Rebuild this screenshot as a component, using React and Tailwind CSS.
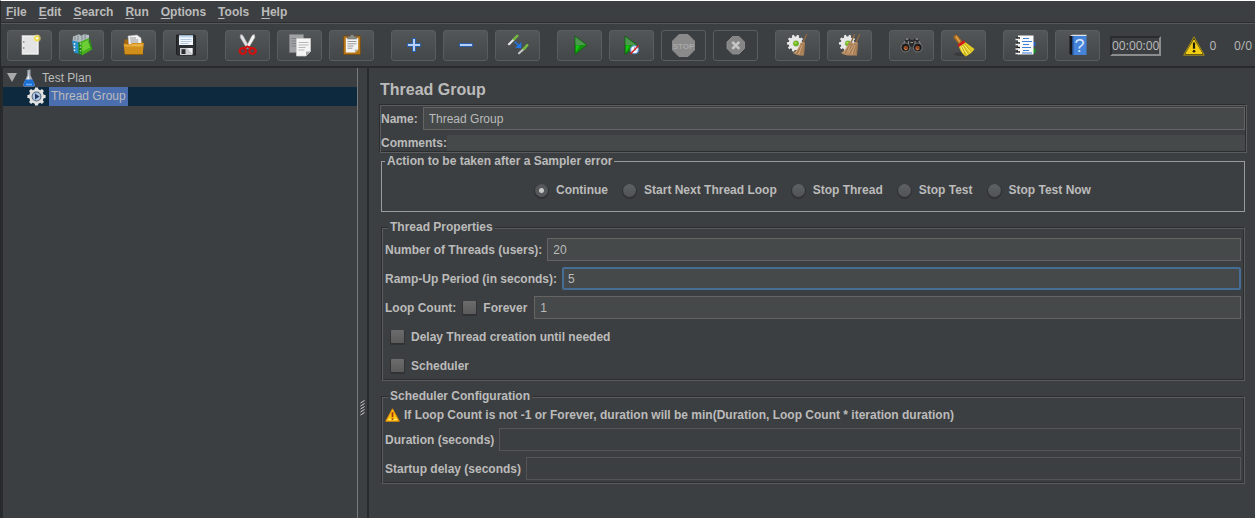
import React from "react";

/* ---------- toolbar icons, all on a 23 x 23 grid ---------- */

function Icon({ children }) {
  return (
    <svg width="23" height="23" viewBox="0 0 23 23" aria-hidden="true" className="block">
      {children}
    </svg>
  );
}

const gearPoints = (cx, cy, outer, inner, teeth) => {
  const pts = [];
  const step = (Math.PI * 2) / teeth;
  for (let i = 0; i < teeth; i++) {
    const a = i * step;
    [
      [inner, -0.32],
      [outer, -0.2],
      [outer, 0.2],
      [inner, 0.32],
    ].forEach(([r, f]) => {
      pts.push(`${(cx + r * Math.cos(a + f * step)).toFixed(2)},${(cy + r * Math.sin(a + f * step)).toFixed(2)}`);
    });
  }
  return pts.join(" ");
};

const NewIcon = () => (
  <Icon>
    <rect x="4" y="1.5" width="16.5" height="19" fill="#f1f1f1" stroke="#c9c9c9" strokeWidth="0.7" />
    <rect x="5.5" y="3" width="13.5" height="16" fill="#e4e4e4" />
    <circle cx="5.8" cy="8" r="0.7" fill="#555" />
    <circle cx="5.8" cy="14" r="0.7" fill="#555" />
    <circle cx="19" cy="4.3" r="3.8" fill="#f4e37a" opacity="0.55" />
    <circle cx="19" cy="4.3" r="2.6" fill="#f0dc3c" />
    <circle cx="19" cy="4.3" r="1.3" fill="#fffbe0" />
  </Icon>
);

const TemplatesIcon = () => (
  <Icon>
    <path d="M3 2.500 9 .3l2 1.500 3-1.500 5 .8v7L9 10 2.500 8z" fill="#b4bdc2" />
    <path d="M5 2.500v4M8 1.500v5M12 1.500v5M15 1v5" stroke="#7d888e" strokeWidth="1" />
    <path d="M2 6.500 9 8v12L4 18.500z" fill="#2c8fc9" />
    <path d="M4.500 9v8" stroke="#d9eef8" strokeWidth="1.500" strokeDasharray="1.800 1.500" />
    <path d="m8.500 8 3.500 1v12.500L8.500 19.500z" fill="#158112" />
    <path d="m10 8 8-3.500 4 11L12 21.500z" fill="#45b01c" />
    <path d="m12 9 5.500-3 2.500 7.500-7.500 4z" fill="#78d63c" opacity="0.800" />
    <path d="M18 4.500 20 6l2 9.500" fill="none" stroke="#238c14" strokeWidth="1" />
    <path d="M10.300 9v11" stroke="#dfe5e2" strokeWidth="0.900" strokeDasharray="1.500 2" />
  </Icon>
);

const OpenIcon = () => (
  <Icon>
    <path d="M2.500 5.500h6l1.500 2h11v12.500h-18.500z" fill="#a5690d" />
    <path d="m6 2 9-1 4 3 .500 8H7z" fill="#f2f2f2" stroke="#bdbdbd" strokeWidth="0.5" />
    <path d="M8 4h6M8.200 6h8M8.400 8h8" stroke="#8d8d8d" strokeWidth="0.9" />
    <path d="M1.500 9.500 8 10.500l2-1.500h12l-1.500 11.500h-17.500z" fill="#d08e1a" />
    <path d="M2.300 10.500 8.300 11.500l2-1.500h10.500l-.3 2.500H2.600z" fill="#e9b045" />
    <path d="M3 20.500h17.500" stroke="#8e5908" strokeWidth="1" />
  </Icon>
);

const SaveIcon = () => (
  <Icon>
    <path d="M2.500 1h18l1 1v19h-18l-1-1z" fill="#2d3033" stroke="#16181a" strokeWidth="0.8" />
    <rect x="5" y="1.500" width="14" height="9.500" fill="#f4f8fc" />
    <rect x="5" y="1.500" width="14" height="2" fill="#bcd8ef" />
    <path d="M6.500 5.500h11M6.500 7.500h11M6.500 9.500h8" stroke="#a9c2da" strokeWidth="0.9" />
    <rect x="6" y="14" width="12.500" height="7" fill="#c9cccf" />
    <rect x="7.500" y="15.200" width="4" height="4.800" fill="#2b2d30" />
    <path d="m13 14 5.500 0V20z" fill="#eceeef" />
  </Icon>
);

const CutIcon = () => (
  <Icon>
    <path d="M4.500.5c1.500 0 2.500.8 3 2l5.800 10.500-2.500 1.500L4.200 3.500z" fill="#e2e2e2" stroke="#a2a2a2" strokeWidth="0.5" />
    <path d="M18.500.5c-1.500 0-2.500.8-3 2L10 13l2.300 1.500 6.600-11z" fill="#f4f4f4" stroke="#a2a2a2" strokeWidth="0.5" />
    <ellipse cx="6.800" cy="17" rx="3.200" ry="2.900" fill="none" stroke="#d40f0f" strokeWidth="2.200" />
    <ellipse cx="16.500" cy="17" rx="3.200" ry="2.900" fill="none" stroke="#d40f0f" strokeWidth="2.200" />
    <path d="m8 14.300 3.500-2 3.800 2" fill="none" stroke="#d40f0f" strokeWidth="2" />
  </Icon>
);

const CopyIcon = () => (
  <Icon>
    <path d="M1.500.5h14v18h-14z" fill="#a0a2a3" stroke="#7f8284" strokeWidth="0.7" />
    <path d="M3.500 4.500h9M3.500 7h9M3.500 9.500h9M3.500 12h9" stroke="#7b7e80" strokeWidth="0.9" />
    <path d="M8.500 4.500h14v13l-4.500 4.500H8.500z" fill="#f5f5f5" stroke="#cfcfcf" strokeWidth="0.7" />
    <path d="M10.500 8.500h10M10.500 11h10M10.500 13.500h7M10.500 16h6" stroke="#b0b0b0" strokeWidth="0.9" />
    <path d="M22.500 17.500H18V22z" fill="#a5a5a5" />
  </Icon>
);

const PasteIcon = () => (
  <Icon>
    <rect x="3.500" y="2" width="17" height="18.500" rx="0.800" fill="#b87716" stroke="#74480a" strokeWidth="0.700" />
    <path d="M5.800 4h12.400v11.500L15 18.500H5.800z" fill="#f3f3f3" />
    <path d="M7.500 7.500h9M7.500 9.800h9M7.500 12h6M7.500 14.200h5" stroke="#8f8f8f" strokeWidth="0.9" />
    <path d="M18.200 15.500H14.500l.5 3z" fill="#b4b4b4" />
    <path d="M7.500 2.500h2.500L11 .7h2.200l1 1.800h2.300v2.500h-9z" fill="#8b8d88" stroke="#5c5e5a" strokeWidth="0.500" />
  </Icon>
);

const PlusIcon = () => (
  <Icon>
    <path d="M12 4v14M5 11h14" stroke="#2b5fae" strokeWidth="4" />
    <path d="M12 5v12M6 11h12" stroke="#b5d0f2" strokeWidth="2" />
  </Icon>
);

const MinusIcon = () => (
  <Icon>
    <path d="M5 11h14" stroke="#2b5fae" strokeWidth="4" />
    <path d="M6 11h12" stroke="#b5d0f2" strokeWidth="2" />
  </Icon>
);

const ToggleIcon = () => (
  <Icon>
    <g strokeLinecap="round">
      <path d="m3 10.200 5-5" stroke="#e8e8e8" strokeWidth="2.200" />
      <path d="m8 5.200 3.300-3.300" stroke="#76b83f" strokeWidth="2.600" />
      <path d="m13 19.300 5-4.500" stroke="#c8caca" strokeWidth="2" />
      <path d="m18 14.800 3.200-3.600" stroke="#76b83f" strokeWidth="2.600" />
    </g>
    <path d="m9 8 4 4" stroke="#2277e8" strokeWidth="2" strokeDasharray="1.800 0.500" />
    <path d="m15.500 8-.3 6.200-6-.4z" fill="#2277e8" />
  </Icon>
);

function PlayShape({ x }) {
  return (
    <g>
      <path d={`M${x} 2 ${x + 12} 11 ${x} 20.500z`} fill="#12920f" stroke="#0a5c09" strokeWidth="0.700" />
      <path d={`M${x + 0.5} 3 ${x + 11} 11H${x + 0.5}z`} fill="#4f9650" />
      <path d={`M${x + 0.8} 11.500H${x + 5}L${x + 0.8} 18.500z`} fill="#12c912" />
    </g>
  );
}

const StartIcon = () => (
  <Icon>
    <PlayShape x={7} />
  </Icon>
);

const StartNoPauseIcon = () => (
  <Icon>
    <PlayShape x={5} />
    <circle cx="14.500" cy="15.700" r="4" fill="#f4f8ff" stroke="#5d91c8" strokeWidth="1.300" />
    <path d="M14.500 13v3h2" fill="none" stroke="#8099b5" strokeWidth="0.700" />
    <path d="m10.500 20 8-8.500" stroke="#d41f1f" strokeWidth="1.400" />
  </Icon>
);

const StopIcon = () => (
  <Icon>
    <path d="M7 .5h9L22.500 7v9L16 22.500H7L.5 16V7z" fill="#8a8a8a" stroke="#959595" strokeWidth="0.800" />
    <text x="11.500" y="14.500" textAnchor="middle" fontFamily="Liberation Sans, sans-serif" fontSize="8" fontWeight="700" fill="#a8a8a8">
      STOP
    </text>
  </Icon>
);

const ShutdownIcon = () => (
  <Icon>
    <path d="M8.500 2.500h6.500L20.500 8v6.500L15 20H8.500L3 14.500V8z" fill="#858585" stroke="#949494" strokeWidth="0.800" />
    <path d="m8.300 7.800 7 7M15.300 7.800l-7 7" stroke="#c6c6c6" strokeWidth="2.600" />
  </Icon>
);

function GearWithDot() {
  return (
    <g>
      <polygon points={gearPoints(9.5, 9.3, 8.6, 6.8, 10)} fill="#e9e9e9" />
      <circle cx="10" cy="9.500" r="3.400" fill="#cfd3cb" />
      <circle cx="10" cy="9.500" r="2.800" fill="#6cb51e" />
      <circle cx="9.400" cy="8.800" r="1.100" fill="#a8e05a" />
    </g>
  );
}

function Broom({ x }) {
  return (
    <g transform={`translate(${x} 0)`}>
      <path d="m20.500.5-3.500 8" stroke="#8d6741" strokeWidth="1.500" strokeLinecap="round" />
      <path d="M14.500 9c1.500-1.500 3.500-1.500 4.500 0l-1 12.500c-4 .3-8-.5-11-2.500 3-1.500 6-5.500 7.500-10z" fill="#b58a60" />
      <path d="m15.500 10-4.500 9.500M17 10l-2.500 10.500M18.200 10.500l-1 10.500" stroke="#8d6743" strokeWidth="0.600" />
      <path d="m14.500 11-5 8M16.300 11l-3.500 9" stroke="#d8b28a" strokeWidth="0.700" />
    </g>
  );
}

const ClearIcon = () => (
  <Icon>
    <GearWithDot />
    <Broom x={0} />
  </Icon>
);

const ClearAllIcon = () => (
  <Icon>
    <GearWithDot />
    <Broom x={-4} />
    <Broom x={1} />
  </Icon>
);

const SearchIcon = () => (
  <Icon>
    <path d="m5.500 5 3.500-1 2 2h2l2-2 3.500 1 4 8-7 4-3-4h-2l-3 4-6-4z" fill="#2c2c2e" />
    <path d="m6 5.300 2.500-.7M15.500 4.600l2.500.7M10.500 8.500h2.500" stroke="#9a9a9a" strokeWidth="1.200" />
    <path d="m5 7-2 4M19 7l1.800 4M8.500 7v3M15 7v3" stroke="#85888a" strokeWidth="1.200" />
    <circle cx="5.500" cy="13.500" r="4.400" fill="#1c1c1d" stroke="#85888a" strokeWidth="0.800" />
    <circle cx="17.800" cy="13.500" r="4.400" fill="#1c1c1d" stroke="#85888a" strokeWidth="0.800" />
    <circle cx="5.800" cy="14" r="2.300" fill="#8f4a22" />
    <circle cx="17.500" cy="14" r="2.300" fill="#8f4a22" />
    <path d="M4.500 14.500c.5 1.500 2 1.500 2.700.5M16.200 14.500c.5 1.500 2 1.500 2.700.5" fill="none" stroke="#e0a071" strokeWidth="0.800" />
  </Icon>
);

const SearchResetIcon = () => (
  <Icon>
    <ellipse cx="10" cy="20" rx="8" ry="2" fill="#2f3233" opacity="0.600" />
    <path d="m4 3.200 3.500 4.500" stroke="#a86a1c" strokeWidth="4.600" strokeLinecap="round" />
    <path d="m4.300 3 3.200 4.500" stroke="#dfa350" strokeWidth="1.700" strokeLinecap="round" />
    <path d="m12.500 7.500 10 7.500c-2 3-5 5.500-9 7.500-4-3-6-7.500-7-11z" fill="#e3cb24" />
    <path d="m9.500 12.500 4.500 9M11.500 11.500l5 8.500M13.200 10.200l6 8" stroke="#b3980f" strokeWidth="0.700" />
    <path d="m8.500 12 3 7M12.500 11l6 7.500M10.500 12l5 8.500" stroke="#fff48c" strokeWidth="0.800" />
    <path d="m5.300 11 6.500-4.800 1.700 2.300-6.700 4.500z" fill="#cf1b1b" />
  </Icon>
);

const FunctionIcon = () => (
  <Icon>
    <rect x="18" y="8" width="3.500" height="4" fill="#2a63c8" />
    <rect x="18" y="14.500" width="3.500" height="4.500" fill="#18941a" />
    <rect x="4" y="1.500" width="15.500" height="19" fill="#f9f9f9" />
    <path d="M9 4.500h6M8 7.500h10M9 10.500h6M8 13.500h9M9 16.500h6M8 19h10" stroke="#3f80d8" strokeWidth="1" />
    <g stroke="#1c1c1c" strokeWidth="1.300">
      <path d="M2.500 4H6M2.500 9H6M2.500 13.500H6M2.500 18H6" />
    </g>
    <g stroke="#f4f4f4" strokeWidth="1.500">
      <path d="M1.500 5.500H5M1.500 10.500H5M1.500 15H5M1.500 19.500H5" />
    </g>
  </Icon>
);

const HelpIcon = () => (
  <Icon>
    <path d="m3.500 2 2.500-1v20l-2.500-1z" fill="#15171b" />
    <path d="M4 1.500 6.500.8h14V2H5z" fill="#e0e3e8" />
    <rect x="6" y="2" width="14.500" height="19" fill="#4583d9" />
    <rect x="6" y="2" width="1.500" height="19" fill="#26518f" />
    <text x="13.500" y="18" textAnchor="middle" fontFamily="Liberation Sans, sans-serif" fontSize="18" fontWeight="400" fill="#dbe9fb">
      ?
    </text>
  </Icon>
);

/* ---------- small drawings ---------- */

const WarningIcon = () => (
  <svg width="22" height="20" viewBox="0 0 22 20" aria-hidden="true" className="block shrink-0">
    <path d="M11 .8 21.300 19.200H.700z" fill="#46431f" stroke="#b5980d" strokeWidth="0.900" strokeLinejoin="round" />
    <path d="M11 4 19 17.500H3z" fill="#f3cd12" stroke="#f3cd12" strokeWidth="1" strokeLinejoin="round" />
    <path d="M11 6.500v6.200" stroke="#1e1c0c" strokeWidth="2.200" />
    <circle cx="11" cy="15.200" r="1.300" fill="#1e1c0c" />
  </svg>
);

const SmallWarningIcon = () => (
  <svg width="15" height="14" viewBox="0 0 15 14" aria-hidden="true" className="block shrink-0">
    <path d="M7.500.8 14.300 13.200H.7z" fill="#fbc40e" stroke="#e88a0c" strokeWidth="1" strokeLinejoin="round" />
    <path d="M3 11.500h9" stroke="#ffe95a" strokeWidth="1.500" />
    <path d="M7.500 4.200v5" stroke="#a3390b" strokeWidth="1.800" />
    <path d="M7.500 10.300v1.600" stroke="#a3390b" strokeWidth="1.800" />
  </svg>
);

const FlaskIcon = () => (
  <svg width="12" height="18" viewBox="0 0 12 18" aria-hidden="true" className="block shrink-0">
    <path d="M4.300 1 7.500.5v5.700l4.200 9c.5 1.300-.2 2.300-1.400 2.300H1.700C.5 17.500-.2 16.500.3 15.200l4-9z" fill="#a3acb4" />
    <path d="M5.500 1.500v5L2.800 12h3.700z" fill="#eef1f4" />
    <path d="M2.300 10.500h7.400l1.800 4.800c.3 1.100-.3 2-1.400 2H1.900c-1.100 0-1.700-.9-1.400-2z" fill="#1d6fd2" />
    <path d="M3 15.500h6" stroke="#63b0f5" strokeWidth="1.500" />
  </svg>
);

const GearIcon = () => (
  <svg width="19" height="19" viewBox="0 0 19 19" aria-hidden="true" className="block shrink-0">
    <polygon points={gearPoints(9.5, 9.5, 9.2, 7.4, 8)} fill="#e2e2e2" />
    <circle cx="9.500" cy="9.500" r="4.900" fill="#50657f" />
    <circle cx="9.500" cy="9.500" r="3.900" fill="#b5c8dd" />
    <path d="m8 6.500 4.500 3L8 12.500z" fill="#1f3a66" />
  </svg>
);

/* ---------- data ---------- */

const menus = [
  ["F", "ile"],
  ["E", "dit"],
  ["S", "earch"],
  ["R", "un"],
  ["O", "ptions"],
  ["T", "ools"],
  ["H", "elp"],
];

const toolGroups = [
  [
    ["New", NewIcon],
    ["Templates", TemplatesIcon],
    ["Open", OpenIcon],
    ["Save", SaveIcon],
  ],
  [
    ["Cut", CutIcon],
    ["Copy", CopyIcon],
    ["Paste", PasteIcon],
  ],
  [
    ["Expand All", PlusIcon],
    ["Collapse All", MinusIcon],
    ["Toggle", ToggleIcon],
  ],
  [
    ["Start", StartIcon],
    ["Start no pauses", StartNoPauseIcon],
    ["Stop", StopIcon, true],
    ["Shutdown", ShutdownIcon, true],
  ],
  [
    ["Clear", ClearIcon],
    ["Clear All", ClearAllIcon],
  ],
  [
    ["Search", SearchIcon],
    ["Reset Search", SearchResetIcon],
  ],
  [
    ["Function Helper Dialog", FunctionIcon],
    ["Help", HelpIcon],
  ],
];

const errorActions = ["Continue", "Start Next Thread Loop", "Stop Thread", "Stop Test", "Stop Test Now"];

/* ---------- form pieces ---------- */

const etched =
  "border border-t-[#2b2d2f] border-l-[#2b2d2f] border-b-[#5a5c5e] border-r-[#5a5c5e] shadow-[inset_1px_1px_0_#5a5c5e,inset_-1px_-1px_0_#2b2d2f]";

const fieldBase = "h-[23px] min-w-0 flex-1 font-normal text-[#bbbbbb] outline-none";

function Field({ id, label, className, ...rest }) {
  return (
    <div className="flex h-[23px] items-center gap-[5px]">
      <label htmlFor={id} className="whitespace-nowrap">
        {label}
      </label>
      <input id={id} type="text" className={`${fieldBase} ${className}`} {...rest} />
    </div>
  );
}

const enabledField = "border border-[#646464] bg-[#45494a] px-[5px]";
const focusedField = "rounded-xs border-2 border-[#466d94] bg-[#45494a] px-1";
const disabledField = "border border-[#555555] bg-[#3c3f41] px-[5px]";

function Check({ label }) {
  return (
    <label className="flex h-[23px] items-center gap-[7px] whitespace-nowrap">
      <input
        type="checkbox"
        className="h-[13px] w-[13px] appearance-none rounded-[1px] bg-linear-to-b from-[#6c6c6c] to-[#5b5b5b] shadow-[0_1px_0_1px_#303234]"
      />
      {label}
    </label>
  );
}

function Legend({ children }) {
  return <legend className="ml-[3px] h-[14px] bg-[#3c3f41] px-[2px] leading-[14px]">{children}</legend>;
}

export default function App() {
  return (
    <div className="flex min-h-screen flex-col border-t border-l border-t-white border-l-[#26282a] bg-[#3c3f41] font-['Liberation_Sans',Arial,sans-serif] text-[12px] leading-[14px] font-bold text-[#bbbbbb]">
      <nav className="flex h-[22px] items-center gap-3 border-b border-[#2b2d2f] px-[5px]">
        {menus.map(([key, rest]) => (
          <button key={key} type="button">
            <span className="underline underline-offset-2">{key}</span>
            {rest}
          </button>
        ))}
      </nav>

      <div className="flex items-center justify-between border-t border-b-2 border-t-[#555759] border-b-[#282a2c] pt-[6px] pr-[3px] pb-[5px] pl-[6px]">
        <div className="flex gap-[17px]">
          {toolGroups.map((group, i) => (
            <div key={i} className="flex gap-[7px]">
              {group.map(([label, Glyph, disabled]) => (
                <button
                  key={label}
                  type="button"
                  aria-label={label}
                  disabled={disabled}
                  className="flex h-[31px] w-[45px] items-center justify-center rounded-[3px] border border-[#5a5d5e] bg-linear-to-b from-[#525658] to-[#434748] disabled:bg-none"
                >
                  <Glyph />
                </button>
              ))}
            </div>
          ))}
          <div className="-ml-[7px] flex items-center font-['Open_Sans',sans-serif] font-normal">
            <div className="border-2 border-t-[#2a2c2e] border-r-[#8a8c8e] border-b-[#8a8c8e] border-l-[#2a2c2e] leading-4">
              00:00:00
            </div>
            <div className="ml-[22px] flex items-center gap-1">
              <WarningIcon />
              <span>0</span>
            </div>
          </div>
        </div>
        <div className="font-['Open_Sans',sans-serif] font-normal">0/0</div>
      </div>

      <div className="flex flex-1">
        <aside className="w-[357px] shrink-0 border-r border-l-2 border-r-[#77797b] border-l-[#282a2c] font-normal">
          <ul>
            <li>
              <div className="flex h-[19px] items-center pl-1">
                <svg width="10" height="9" viewBox="0 0 10 9" aria-hidden="true" className="block shrink-0">
                  <path d="M0 0h10L5 9z" fill="#a9a9a9" />
                </svg>
                <span className="ml-[6px]">
                  <FlaskIcon />
                </span>
                <span className="ml-[7px]">Test Plan</span>
              </div>
              <ul>
                <li className="flex h-[19px] items-center bg-[#0d293e] pl-6">
                  <GearIcon />
                  <span className="ml-[3px] bg-[#4b6eaf] px-[2px] leading-[19px]">Thread Group</span>
                </li>
              </ul>
            </li>
          </ul>
        </aside>

        <div role="separator" aria-orientation="vertical" className="flex w-[11px] shrink-0 justify-center border-r-2 border-[#282a2c] pt-[332px]">
          <svg width="5" height="16" viewBox="0 0 5 16" aria-hidden="true" className="block">
            {[0, 3, 6, 9, 12].map((y) => (
              <path key={y} d={`M.5 ${y + 3} 4.500 ${y + 0.5}`} stroke="#cfcfcf" strokeWidth="1" />
            ))}
          </svg>
        </div>

        <main className="min-w-0 flex-1 px-[10px] pt-[13px]">
          <h1 className="ml-[1px] text-base leading-[18px]">Thread Group</h1>

          <section className={`-mr-[2px] mt-[5px] p-[1px] pt-[2px] ${etched}`}>
            <Field id="name" label="Name:" defaultValue="Thread Group" className={enabledField} />
            <div className="mt-[5px] flex h-4 items-center">
              <label htmlFor="comments">Comments:</label>
              <input id="comments" type="text" className="h-4 min-w-0 flex-1 bg-[#45494a] px-1 font-normal outline-none" />
            </div>
          </section>

          <fieldset className="mt-[1px] ml-[2px] border border-[#999b9d] pt-[15px] pb-[14px]">
            <Legend>Action to be taken after a Sampler error</Legend>
            <div className="flex items-center justify-center gap-[15px]">
              {errorActions.map((action, i) => (
                <label key={action} className="flex items-center gap-2 whitespace-nowrap">
                  <input
                    type="radio"
                    name="on-error"
                    defaultChecked={i === 0}
                    className="h-[13px] w-[13px] appearance-none rounded-full bg-[#595c5e] bg-linear-to-b from-[#5f6264] to-[#505355] shadow-[0_1px_0_1px_#303234] checked:bg-[radial-gradient(circle,#c8c8c8_0_2px,#55585a_3px)]"
                  />
                  {action}
                </label>
              ))}
            </div>
          </fieldset>

          <fieldset className={`mt-[8px] ml-[2px] pr-[3px] pb-[3px] pl-[3px] ${etched}`}>
            <Legend>Thread Properties</Legend>
            <div className="flex flex-col gap-[6px] pt-1">
              <Field id="threads" label="Number of Threads (users):" defaultValue="20" className={enabledField} />
              <Field id="ramp" label="Ramp-Up Period (in seconds):" defaultValue="5" className={focusedField} />
              <div className="flex items-center gap-[7px]">
                <label htmlFor="loops" className="whitespace-nowrap">
                  Loop Count:
                </label>
                <Check label="Forever" />
                <input id="loops" type="text" defaultValue="1" className={`${fieldBase} ${enabledField}`} />
              </div>
              <div className="pl-[6px]">
                <Check label="Delay Thread creation until needed" />
              </div>
              <div className="pl-[6px]">
                <Check label="Scheduler" />
              </div>
            </div>
          </fieldset>

          <fieldset className={`mt-[8px] ml-[2px] pr-[3px] pb-[3px] pl-[3px] ${etched}`}>
            <Legend>Scheduler Configuration</Legend>
            <div className="flex flex-col gap-[6px] pt-[5px]">
              <p className="flex items-center gap-1">
                <SmallWarningIcon />
                If Loop Count is not -1 or Forever, duration will be min(Duration, Loop Count * iteration duration)
              </p>
              <Field id="duration" label="Duration (seconds)" disabled className={disabledField} />
              <Field id="delay" label="Startup delay (seconds)" disabled className={disabledField} />
            </div>
          </fieldset>
        </main>
      </div>
    </div>
  );
}
